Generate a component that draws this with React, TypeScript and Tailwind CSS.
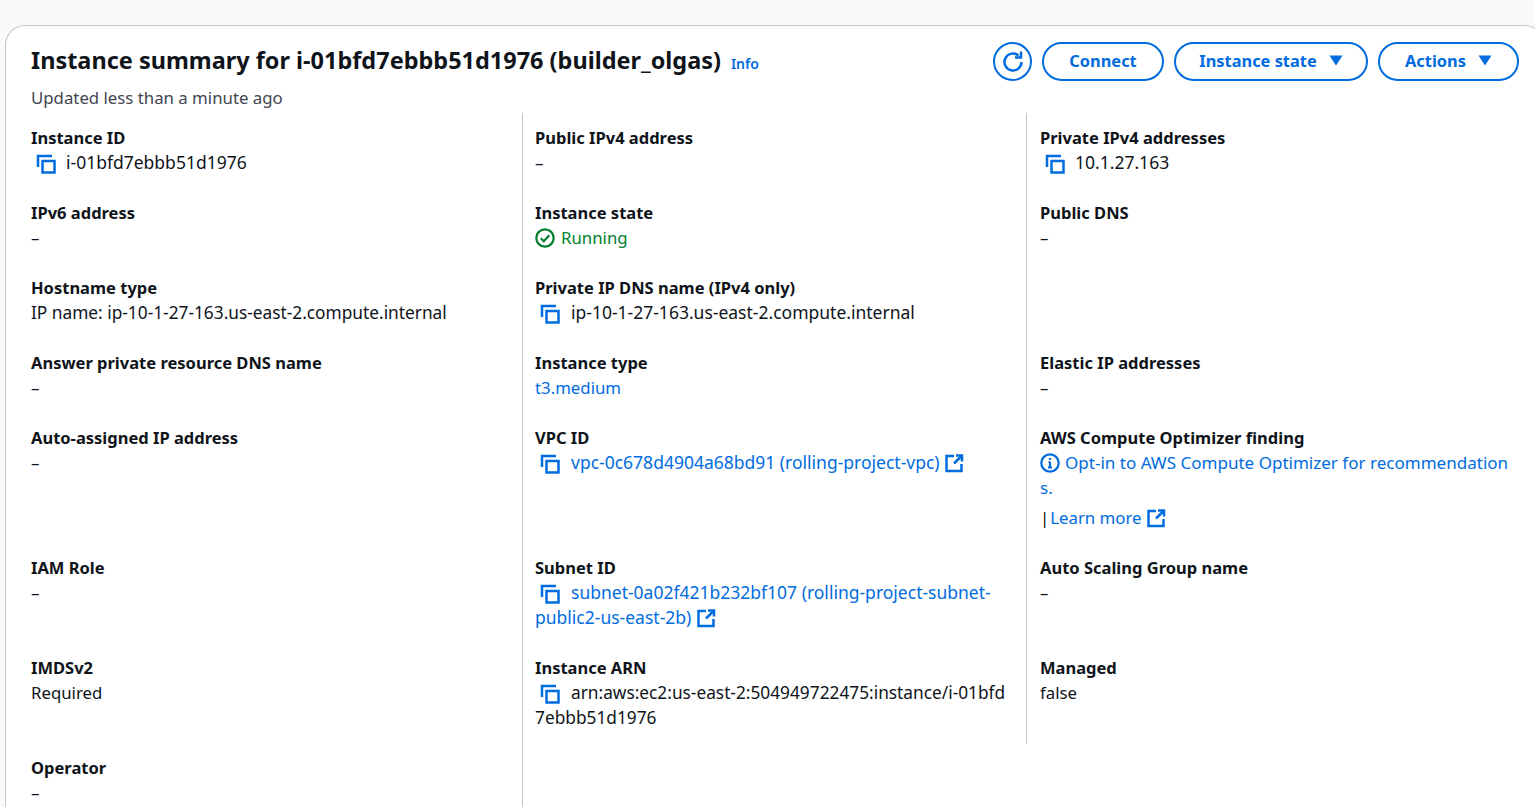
import type { ReactNode } from "react";

const BLUE = "#006ce0";

function CopyIcon() {
  return (
    <svg width="20" height="20" viewBox="0 0 20 20" fill="none" stroke={BLUE} strokeWidth="2.5" className="shrink-0">
      <path d="M2 13V2h14" />
      <rect x="6.5" y="7" width="12" height="11.5" />
    </svg>
  );
}

function ExternalIcon() {
  return (
    <svg width="20" height="20" viewBox="0 0 20 20" fill="none" stroke={BLUE} strokeWidth="2.5" className="inline-block shrink-0 align-[-4px]">
      <path d="M10 3H2.5v15h15v-7" />
      <path d="M10 10.5 17 3.5" />
      <path d="M12 2.5h6v6" />
    </svg>
  );
}

function Label({ children }: { children: ReactNode }) {
  return <div className="text-[#0f141a] text-[16.5px] font-bold">{children}</div>;
}

function Dash() {
  return <div className="text-[#0f141a]">–</div>;
}

function Copy({ children, size = "text-[17.5px]", gap = "mr-[10px]" }: { children: ReactNode; size?: string; gap?: string }) {
  return (
    <div className={size}>
      <span className={`inline-block align-[-5px] ml-[5px] ${gap}`}>
        <CopyIcon />
      </span>
      {children}
    </div>
  );
}

function Col({ children, className }: { children: ReactNode; className: string }) {
  return <div className={`grid ${className}`}>{children}</div>;
}

function ActionButton({ label, w, caret }: { label: string; w: string; caret?: boolean }) {
  return (
    <button className={`h-[39px] ${w} pb-[2px] rounded-[20px] border-2 border-[#006ce0] text-[#006ce0] text-[16.4px] font-bold flex items-center justify-center`}>
      {label}
      {caret && (
        <svg width="14" height="11" viewBox="0 0 14 11" className="ml-[12px]" fill={BLUE}>
          <path d="M0.5 0.5h13L7 10.5z" />
        </svg>
      )}
    </button>
  );
}

export default function App() {
  return (
    <div className="h-[807px] overflow-hidden bg-[#fafafa] pt-[25px] pl-[5px] text-[16.8px] leading-[25px] text-[#0f141a] font-['Noto_Sans',sans-serif]">
      <div className="h-[800px] w-[1540px] bg-white rounded-t-[20px] border border-b-0 border-[#c6c6cd]">
        <div className="flex justify-between pl-[25px] pr-[25px] pt-[16px] h-[87px]">
          <div>
            <div className="flex items-baseline -mt-[1px]">
              <h1 className="text-[23.47px] leading-[38px] font-bold text-[#0f141a]">
                Instance summary for i-01bfd7ebbb51d1976 (builder_olgas)
              </h1>
              <a className="ml-[10px] text-[14px] font-semibold text-[#006ce0]">Info</a>
            </div>
            <div className="text-[#424650] mt-[6px]">Updated less than a minute ago</div>
          </div>
          <div className="flex gap-[10px]">
            <button className="w-[39px] h-[39px] rounded-full border-2 border-[#006ce0] flex items-center justify-center">
              <svg width="24" height="24" viewBox="0 0 24 24" fill="none" stroke={BLUE} strokeWidth="2.5">
                <path d="M20.5 12a8.5 8.5 0 1 1-3-6.5" />
                <path d="M20 1.5v6h-6" />
              </svg>
            </button>
            <ActionButton label="Connect" w="w-[122px]" />
            <ActionButton label="Instance state" w="w-[194px]" caret />
            <ActionButton label="Actions" w="w-[141px]" caret />
          </div>
        </div>

        <div className="flex">
          <Col className="w-[516px] pl-[25px] pt-[12px] grid-rows-[75px_75px_75px_75px_130px_100px_100px_auto]">
            <div>
              <Label>Instance ID</Label>
              <Copy>i-01bfd7ebbb51d1976</Copy>
            </div>
            <div>
              <Label>IPv6 address</Label>
              <Dash />
            </div>
            <div>
              <Label>Hostname type</Label>
              <div className="text-[17.3px]">IP name: ip-10-1-27-163.us-east-2.compute.internal</div>
            </div>
            <div>
              <Label>Answer private resource DNS name</Label>
              <Dash />
            </div>
            <div>
              <Label>Auto-assigned IP address</Label>
              <Dash />
            </div>
            <div>
              <Label>IAM Role</Label>
              <Dash />
            </div>
            <div>
              <Label>IMDSv2</Label>
              <div>Required</div>
            </div>
            <div>
              <Label>Operator</Label>
              <Dash />
            </div>
          </Col>

          <Col className="w-[504px] pl-[12px] pr-[15px] pt-[12px] border-l border-[#c6c6cd] h-[700px] grid-rows-[75px_75px_75px_75px_130px_100px_100px_auto]">
            <div>
              <Label>Public IPv4 address</Label>
              <Dash />
            </div>
            <div>
              <Label>Instance state</Label>
              <div className="flex items-center text-[#00802f]">
                <svg width="20" height="20" viewBox="0 0 20 20" fill="none" stroke="#00802f" strokeWidth="2.2" className="mr-[6px]">
                  <circle cx="10" cy="10" r="8.7" />
                  <path d="M5.8 10.2l3 3 5.5-6" />
                </svg>
                Running
              </div>
            </div>
            <div>
              <Label>Private IP DNS name (IPv4 only)</Label>
              <Copy gap="mr-[11px]">ip-10-1-27-163.us-east-2.compute.internal</Copy>
            </div>
            <div>
              <Label>Instance type</Label>
              <a className="text-[#006ce0]">t3.medium</a>
            </div>
            <div>
              <Label>VPC ID</Label>
              <Copy gap="mr-[11px]">
                <a className="text-[#006ce0]">vpc-0c678d4904a68bd91 (rolling-project-vpc)</a> <ExternalIcon />
              </Copy>
            </div>
            <div>
              <Label>Subnet ID</Label>
              <Copy gap="mr-[11px]">
                <a className="text-[#006ce0]">subnet-0a02f421b232bf107 (rolling-project-subnet-public2-us-east-2b)</a>{" "}
                <ExternalIcon />
              </Copy>
            </div>
            <div>
              <Label>Instance ARN</Label>
              <Copy size="text-[17.3px]" gap="mr-[11px]">
                <span className="break-all">arn:aws:ec2:us-east-2:504949722475:instance/i-01bfd7ebbb51d1976</span>
              </Copy>
            </div>
          </Col>

          <Col className="w-[500px] pl-[13px] pr-[12px] pt-[12px] border-l border-[#c6c6cd] h-[631px] grid-rows-[75px_75px_75px_75px_130px_100px_auto]">
            <div>
              <Label>Private IPv4 addresses</Label>
              <Copy>10.1.27.163</Copy>
            </div>
            <div>
              <Label>Public DNS</Label>
              <Dash />
            </div>
            <div />
            <div>
              <Label>Elastic IP addresses</Label>
              <Dash />
            </div>
            <div>
              <Label>AWS Compute Optimizer finding</Label>
              <div className="text-[#006ce0] text-[17.05px] break-all">
                <svg width="20" height="20" viewBox="0 0 20 20" fill="none" stroke={BLUE} strokeWidth="2.2" className="inline-block align-[-4px] mr-[5px]">
                  <circle cx="10" cy="10" r="8.7" />
                  <path d="M10 9v5.5M8 14.5h4M8.5 9H10" />
                  <path d="M10 5v2" />
                </svg>
                Opt-in to AWS Compute Optimizer for recommendations.
              </div>
              <div className="mt-[5px]">
                <span className="mr-[1px]">|</span>
                <a className="text-[#006ce0]">Learn more</a> <ExternalIcon />
              </div>
            </div>
            <div>
              <Label>Auto Scaling Group name</Label>
              <Dash />
            </div>
            <div>
              <Label>Managed</Label>
              <div>false</div>
            </div>
          </Col>
        </div>
      </div>
    </div>
  );
}
